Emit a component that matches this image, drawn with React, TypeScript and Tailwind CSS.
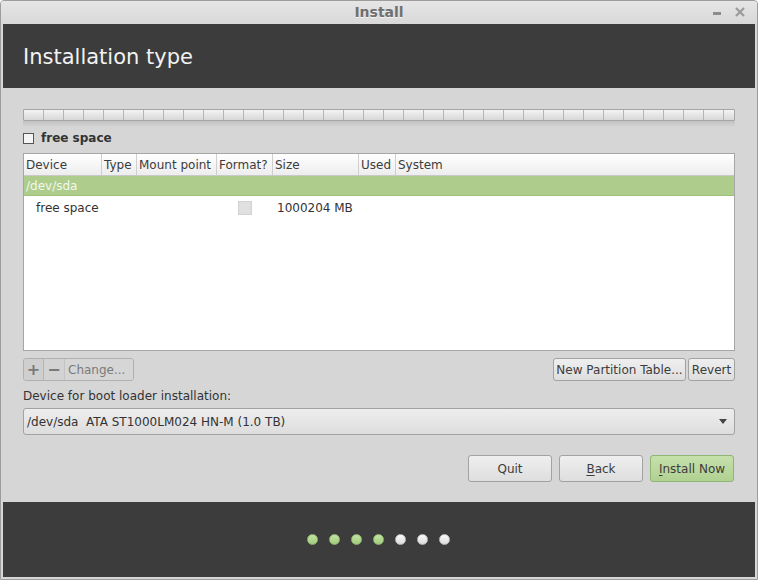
import React from "react";

const font = { fontFamily: '"DejaVu Sans", "Noto Sans", sans-serif' };

const columns = [
  { label: "Device", w: "w-[78px]" },
  { label: "Type", w: "w-[35px]" },
  { label: "Mount point", w: "w-[80px]" },
  { label: "Format?", w: "w-[56px]" },
  { label: "Size", w: "w-[86px]" },
  { label: "Used", w: "w-[37px]" },
  { label: "System", w: "flex-1" },
];

function Button({
  children,
  green,
  className = "",
}: {
  children: React.ReactNode;
  green?: boolean;
  className?: string;
}) {
  return (
    <button
      type="button"
      className={
        "flex items-center justify-center rounded-[3px] border text-[12px] text-[#3c3c3c] " +
        (green
          ? "border-[#8fb574] bg-gradient-to-b from-[#c6e0ac] to-[#b0d191] "
          : "border-[#a2a2a2] bg-gradient-to-b from-[#efefef] to-[#dedede] ") +
        className
      }
    >
      {children}
    </button>
  );
}

export default function App() {
  const segments = Array.from({ length: 36 });
  const dots = [true, true, true, true, false, false, false];

  return (
    <div
      style={font}
      className="flex h-[580px] w-[758px] flex-col overflow-hidden rounded-t-[4px] border border-[#9c9c9c] bg-[#d6d6d6]"
    >
      {/* title bar */}
      <div className="relative flex h-[23px] items-center justify-center bg-gradient-to-b from-[#e6e6e6] to-[#d8d8d8]">
        <span className="text-[14px] font-bold text-[#6f6f6f] [text-shadow:0_1px_0_#f4f4f4]">
          Install
        </span>
        <div className="absolute right-[12px] top-[6px] flex items-center gap-[14px]">
          <div className="mt-[3px] h-[3px] w-[8px] bg-[#8c8c8c]" />
          <svg width="10" height="10" viewBox="0 0 10 10">
            <path d="M1 1 L9 9 M9 1 L1 9" stroke="#9a9a9a" strokeWidth="2.2" />
          </svg>
        </div>
      </div>

      <div className="flex flex-1 flex-col px-[2px] pb-[2px]">
        {/* header */}
        <div className="flex h-[64px] items-center bg-[#3c3c3c] pl-[20px] pt-[4px]">
          <span className="text-[21px] text-[#f2f2f2]">Installation type</span>
        </div>

        {/* main */}
        <div className="flex flex-1 flex-col px-[20px] pt-[21px]">
          {/* partition bar */}
          <div className="flex h-[12px] w-[712px] overflow-hidden rounded-[1px] border border-[#a6a6a6] bg-gradient-to-b from-[#f4f4f4] to-[#d8d8d8]">
            {segments.map((_, i) => (
              <div key={i} className="h-full w-[20px] shrink-0 border-r border-[#b4b4b4]" />
            ))}
          </div>
          <div className="h-[6px] w-[712px] bg-gradient-to-b from-[#b8b8b8] to-[#d6d6d6] opacity-70" />

          <div className="mt-[2px] flex items-center gap-[7px]">
            <div className="h-[11px] w-[11px] border border-[#555] bg-[#f4f4f4]" />
            <span className="text-[12px] font-bold text-[#333]">free space</span>
          </div>

          {/* table */}
          <div className="mt-[6px] flex h-[198px] w-[712px] flex-col border border-[#a6a6a6] bg-white">
            <div className="flex h-[22px] items-center border-b border-[#c8c8c8] bg-gradient-to-b from-[#ffffff] to-[#ededed] text-[12px] text-[#3c3c3c]">
              {columns.map((c) => (
                <div
                  key={c.label}
                  className={c.w + " flex h-full items-center border-r border-[#cfcfcf] pl-[2px] last:border-r-0"}
                >
                  {c.label}
                </div>
              ))}
            </div>
            <div className="flex h-[20px] items-center border-b border-[#9cc07a] bg-[#aecd8c] pl-[2px] text-[12px] text-[#f3f7ee]">
              /dev/sda
            </div>
            <div className="flex h-[23px] items-center text-[12px] text-[#333]">
              <span className="w-[214px] pl-[12px]">free space</span>
              <div className="h-[14px] w-[14px] border border-[#d2d2d2] bg-[#e0e0e0]" />
              <span className="pl-[25px]">1000204 MB</span>
            </div>
          </div>

          {/* partition buttons */}
          <div className="mt-[7px] flex h-[23px] w-[712px] items-center justify-between">
            <div className="flex h-full overflow-hidden rounded-[3px] border border-[#b0b0b0] text-[#7a7a7a]">
              <div className="flex w-[20px] items-center justify-center border-r border-[#b4b4b4] bg-[#cfcfcf] text-[16px] font-bold">
                +
              </div>
              <div className="flex w-[21px] items-center justify-center border-r border-[#c4c4c4] bg-[#d3d3d3] text-[16px] font-bold">
                −
              </div>
              <div className="flex w-[68px] items-center pl-[3px] text-[12px] bg-[#d6d6d6]">Change...</div>
            </div>
            <div className="flex h-full gap-[2px]">
              <Button className="h-full w-[133px]">New Partition Table...</Button>
              <Button className="h-full w-[47px]">Revert</Button>
            </div>
          </div>

          <div className="mt-[6px] text-[12px] text-[#333]">Device for boot loader installation:</div>

          {/* combobox */}
          <div className="mt-[3px] flex h-[27px] w-[712px] items-center justify-between rounded-[3px] border border-[#a2a2a2] bg-gradient-to-b from-[#eeeeee] to-[#dddddd] px-[3px] text-[12px] text-[#333]">
            <span>/dev/sda&nbsp; ATA ST1000LM024 HN-M (1.0 TB)</span>
            <svg width="8" height="5" viewBox="0 0 8 5" className="mr-[4px]">
              <path d="M0 0 H8 L4 5 Z" fill="#444" />
            </svg>
          </div>

          {/* nav buttons */}
          <div className="mt-[20px] flex w-[712px] justify-end gap-[7px] pr-[1px]">
            <Button className="h-[27px] w-[84px]">Quit</Button>
            <Button className="h-[27px] w-[84px]">
              <span className="underline underline-offset-2">B</span>ack
            </Button>
            <Button green className="h-[27px] w-[84px]">
              <span className="underline underline-offset-2">I</span>nstall Now
            </Button>
          </div>
        </div>

        {/* footer */}
        <div className="flex h-[75px] items-center justify-center gap-[11px] bg-[#3c3c3c] pr-[1px]">
          {dots.map((g, i) => (
            <div
              key={i}
              className={
                "h-[11px] w-[11px] rounded-full border " +
                (g
                  ? "border-[#8fb86c] bg-gradient-to-b from-[#c4e2a4] to-[#a2cc7c]"
                  : "border-[#bdbdbd] bg-gradient-to-b from-[#fbfbfb] to-[#dcdcdc]")
              }
            />
          ))}
        </div>
      </div>
    </div>
  );
}
